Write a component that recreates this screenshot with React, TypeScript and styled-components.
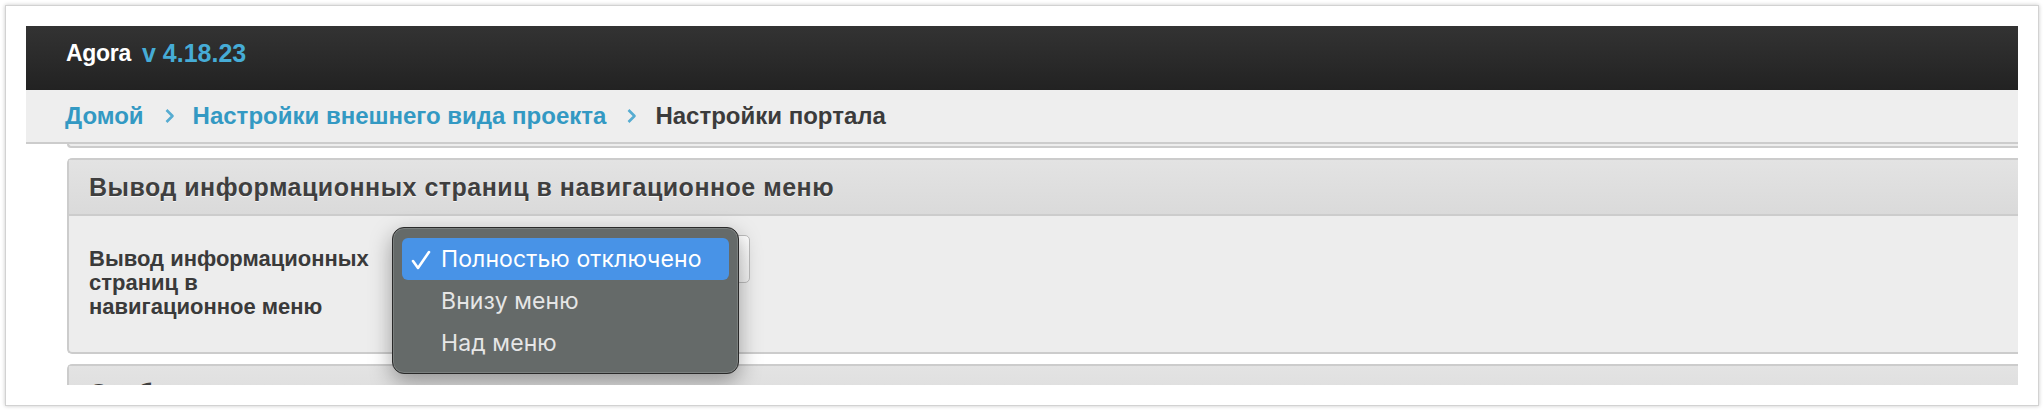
import React from 'react';
import styled, { createGlobalStyle } from 'styled-components';

const Global = createGlobalStyle`
  html, body { margin: 0; padding: 0; background: #ffffff; }
  body { font-family: "Liberation Sans", Arial, sans-serif; }
  * { box-sizing: border-box; }
`;

const Page = styled.div`
  width: 2044px;
  height: 411px;
  padding: 5px 0 0 5px;
`;

const Card = styled.div`
  width: 2034px;
  height: 401px;
  border: 1px solid #d2d2d2;
  box-shadow: 0 0 4px rgba(0, 0, 0, 0.22);
  background: #ffffff;
  padding: 20px;
`;

const Viewport = styled.div`
  width: 100%;
  height: 359px;
  overflow: hidden;
  display: flex;
  flex-direction: column;
`;

const TopBar = styled.div`
  flex: none;
  height: 64px;
  background: linear-gradient(#333333, #222222);
  display: flex;
  align-items: center;
  padding: 0 0 9px 40px;
  font-weight: bold;
  letter-spacing: -0.3px;
`;

const Brand = styled.span`
  color: #ffffff;
  font-size: 23px;
`;

const Version = styled.span`
  color: #46acd6;
  margin-left: 11px;
  font-size: 25px;
  letter-spacing: 0;
`;

const Crumbs = styled.div`
  flex: none;
  height: 54px;
  background: #eeeeee;
  border-bottom: 2px solid #cccccc;
  display: flex;
  align-items: center;
  padding-left: 39px;
  font-size: 24px;
  font-weight: bold;
`;

const CrumbLink = styled.span`
  color: #3399c3;
`;

const CrumbCurrent = styled.span`
  color: #3b3b3b;
`;

const Chevron = styled.svg`
  width: 11px;
  height: 16px;
  margin: 0 18px 0 20px;
  flex: none;
`;

const PanelTail = styled.div`
  flex: none;
  height: 4px;
  margin: 0 -20px 0 41px;
  background: #ededed;
  border-left: 2px solid #cccccc;
  border-bottom: 2px solid #cccccc;
  border-bottom-left-radius: 4px;
`;

const Panel = styled.div`
  flex: none;
  margin: 10px -20px 0 41px;
  border: 2px solid #cccccc;
  border-right: none;
  border-radius: 5px 0 0 5px;
  background: #ededed;
`;

const PanelHeader = styled.div`
  height: 56px;
  background: linear-gradient(#e3e3e3, #dadada);
  border-bottom: 2px solid #cccccc;
  display: flex;
  align-items: center;
  padding-left: 20px;
  font-size: 25px;
  font-weight: bold;
  color: #3f3f3f;
  letter-spacing: 0.5px;
  text-shadow: 0 1px 0 rgba(255, 255, 255, 0.7);
`;

const PanelBody = styled.div`
  height: 136px;
  display: flex;
  align-items: flex-start;
  padding: 0 20px;
`;

const FieldLabel = styled.div`
  width: 290px;
  margin-top: 31px;
  font-size: 22px;
  line-height: 24px;
  font-weight: bold;
  color: #3a3a3a;
`;

const SelectWrap = styled.div`
  position: relative;
  margin: 19px 0 0 16px;
`;

const SelectBox = styled.div`
  width: 355px;
  height: 48px;
  border: 1px solid #bdbdbd;
  border-radius: 5px;
  background: linear-gradient(#ffffff, #f1f1f1);
`;

const Menu = styled.div`
  position: absolute;
  left: -3px;
  top: -8px;
  width: 347px;
  padding: 10px 9px 9px;
  background: #656a69;
  border: 1px solid #2a2a2a;
  border-radius: 12px;
  box-shadow: inset 0 0 0 1px rgba(255, 255, 255, 0.14), 0 8px 22px rgba(0, 0, 0, 0.35);
  font-family: Inter, "Noto Sans", sans-serif;
`;

const MenuItem = styled.div<{ $active?: boolean }>`
  position: relative;
  height: 42px;
  border-radius: 6px;
  display: flex;
  align-items: center;
  padding-left: 39px;
  font-size: 23px;
  letter-spacing: 0.1px;
  color: ${(p) => (p.$active ? '#ffffff' : '#e6e6e6')};
  background: ${(p) => (p.$active ? '#4893e7' : 'transparent')};
`;

const Check = styled.svg`
  position: absolute;
  left: 9px;
  top: 12px;
  width: 20px;
  height: 20px;
`;

const chevron = (
  <path d="M2.5 2 L8.5 8 L2.5 14" fill="none" stroke="#56acd1" strokeWidth="2.6" strokeLinejoin="round" />
);

const App: React.FC = () => (
  <>
    <Global />
    <Page>
      <Card>
        <Viewport>
          <TopBar>
            <Brand>Agora</Brand>
            <Version>v 4.18.23</Version>
          </TopBar>
          <Crumbs>
            <CrumbLink>Домой</CrumbLink>
            <Chevron viewBox="0 0 11 16">{chevron}</Chevron>
            <CrumbLink>Настройки внешнего вида проекта</CrumbLink>
            <Chevron viewBox="0 0 11 16">{chevron}</Chevron>
            <CrumbCurrent>Настройки портала</CrumbCurrent>
          </Crumbs>
          <PanelTail />
          <Panel>
            <PanelHeader>Вывод информационных страниц в навигационное меню</PanelHeader>
            <PanelBody>
              <FieldLabel>
                Вывод информационных
                <br />
                страниц в
                <br />
                навигационное меню
              </FieldLabel>
              <SelectWrap>
                <SelectBox />
                <Menu>
                  <MenuItem $active>
                    <Check viewBox="0 0 20 20">
                      <path d="M2 11 L7 18 L18 2" fill="none" stroke="#ffffff" strokeWidth="2.6" strokeLinecap="round" strokeLinejoin="round" />
                    </Check>
                    Полностью отключено
                  </MenuItem>
                  <MenuItem>Внизу меню</MenuItem>
                  <MenuItem>Над меню</MenuItem>
                </Menu>
              </SelectWrap>
            </PanelBody>
          </Panel>
          <Panel>
            <PanelHeader>Отображение элементов</PanelHeader>
          </Panel>
        </Viewport>
      </Card>
    </Page>
  </>
);

export default App;
